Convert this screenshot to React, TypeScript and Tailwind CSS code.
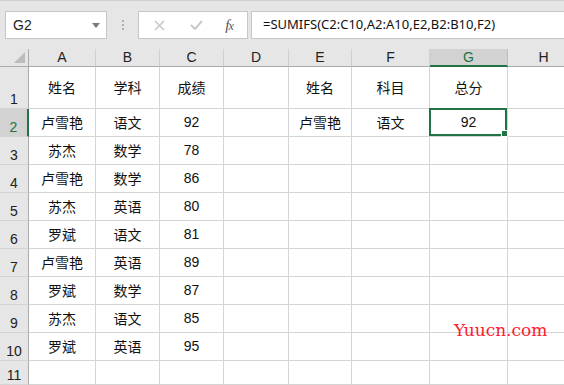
import React from "react"

const cols = [
  { key: "A", w: "w-[67px]" },
  { key: "B", w: "w-[64px]" },
  { key: "C", w: "w-[64px]" },
  { key: "D", w: "w-[65px]" },
  { key: "E", w: "w-[63px]" },
  { key: "F", w: "w-[78px]" },
  { key: "G", w: "w-[78px]" },
  { key: "H", w: "w-[72px]" },
]

const data: string[][] = [
  ["姓名", "学科", "成绩", "", "姓名", "科目", "总分", ""],
  ["卢雪艳", "语文", "92", "", "卢雪艳", "语文", "92", ""],
  ["苏杰", "数学", "78", "", "", "", "", ""],
  ["卢雪艳", "数学", "86", "", "", "", "", ""],
  ["苏杰", "英语", "80", "", "", "", "", ""],
  ["罗斌", "语文", "81", "", "", "", "", ""],
  ["卢雪艳", "英语", "89", "", "", "", "", ""],
  ["罗斌", "数学", "87", "", "", "", "", ""],
  ["苏杰", "语文", "85", "", "", "", "", ""],
  ["罗斌", "英语", "95", "", "", "", "", ""],
  ["", "", "", "", "", "", "", ""],
]

const cjk = "font-['DengXian','Noto_Sans_CJK_SC',sans-serif]"

function Toolbar() {
  return (
    <div className="h-[49px] bg-[#e6e6e6] border-t border-[#d0d0d0] flex items-start pt-[10px] pl-[5px]">
      <div className="w-[102px] h-[28px] bg-white border border-[#c6c6c6] flex items-center justify-between pl-[7px] pr-[6px]">
        <span className="text-[14px] text-[#222] font-['Liberation_Sans',sans-serif]">G2</span>
        <svg width="8" height="5" viewBox="0 0 8 5">
          <path d="M0 0 L8 0 L4 5 Z" fill="#7a7a7a" />
        </svg>
      </div>
      <div className="w-[31px] h-[28px] flex flex-col items-center justify-center gap-[2px]">
        <span className="w-[2px] h-[2px] bg-[#b0b0b0]" />
        <span className="w-[2px] h-[2px] bg-[#b0b0b0]" />
        <span className="w-[2px] h-[2px] bg-[#b0b0b0]" />
      </div>
      <div className="w-[110px] h-[28px] bg-white border border-[#c6c6c6] flex items-center">
        <div className="w-[37px] flex justify-center pl-[4px]">
          <svg width="11" height="11" viewBox="0 0 11 11">
            <path d="M1 1 L10 10 M10 1 L1 10" stroke="#c8c8c8" strokeWidth="1.6" />
          </svg>
        </div>
        <div className="w-[37px] flex justify-center pl-[4px]">
          <svg width="13" height="10" viewBox="0 0 13 10">
            <path d="M1 5 L5 9 L12 1" stroke="#c8c8c8" strokeWidth="2" fill="none" />
          </svg>
        </div>
        <div className="flex-1 flex justify-center pr-[2px]">
          <span className="text-[15px] italic text-[#555] font-['Liberation_Serif',serif] tracking-[-1px]">
            f<span className="text-[12px]">x</span>
          </span>
        </div>
      </div>
      <div className="ml-[3px] flex-1 h-[28px] bg-white border border-r-0 border-[#c6c6c6] flex items-center pl-[11px]">
        <span className="text-[13px] text-[#111] font-['Noto_Sans',sans-serif]">
          =SUMIFS(C2:C10,A2:A10,E2,B2:B10,F2)
        </span>
      </div>
    </div>
  )
}

function HeaderRow() {
  return (
    <div className="flex h-[18px]">
      <div className="w-[29px] shrink-0 bg-[#e6e6e6] border-r border-b border-[#ababab] relative">
        <svg className="absolute right-[3px] bottom-[3px]" width="11" height="11" viewBox="0 0 11 11">
          <path d="M11 0 L11 11 L0 11 Z" fill="#bdbdbd" />
        </svg>
      </div>
      {cols.map((c) => {
        const sel = c.key === "G"
        return (
          <div
            key={c.key}
            className={`${c.w} shrink-0 flex items-center justify-center text-[14px] font-['Liberation_Sans',sans-serif] border-r ${
              sel
                ? "bg-[#d2d2d2] text-[#217346] border-b-2 border-b-[#217346] border-r-[#bdbdbd]"
                : "bg-[#e6e6e6] text-[#222] border-b border-b-[#ababab] border-r-[#cfcfcf]"
            }`}
          >
            {c.key}
          </div>
        )
      })}
    </div>
  )
}

function Row({ idx, cells }: { idx: number; cells: string[] }) {
  const h = idx === 0 ? "h-[42px]" : idx === 10 ? "h-[24px]" : "h-[28px]"
  const selRow = idx === 1
  return (
    <div className={`flex ${h}`}>
      <div
        className={`w-[29px] shrink-0 flex items-end justify-center text-[14px] leading-[18px] font-['Liberation_Sans',sans-serif] border-b border-b-[#d4d4d4] ${
          selRow
            ? "bg-[#d2d2d2] text-[#217346] border-r-2 border-r-[#217346]"
            : "bg-[#e6e6e6] text-[#222] border-r border-r-[#ababab]"
        }`}
      >
        {idx + 1}
      </div>
      {cols.map((c, ci) => {
        const sel = selRow && c.key === "G"
        const val = cells[ci]
        const numeric = /^\d+$/.test(val)
        return (
          <div
            key={c.key}
            className={`${c.w} shrink-0 relative flex items-center justify-center border-r border-b border-[#d4d4d4] bg-white text-[14px] text-[#111] ${
              numeric ? "font-['Liberation_Sans',sans-serif]" : cjk
            }`}
          >
            {val}
            {sel && (
              <div className="absolute -left-[1px] -top-[1px] right-0 bottom-0 border-2 border-[#217346]">
                <div className="absolute -right-[3px] -bottom-[3px] w-[5px] h-[5px] bg-[#217346] border border-white box-content" />
              </div>
            )}
          </div>
        )
      })}
    </div>
  )
}

export default function App() {
  return (
    <div className="w-[564px] h-[385px] overflow-hidden bg-white relative">
      <Toolbar />
      <HeaderRow />
      {data.map((r, i) => (
        <Row key={i} idx={i} cells={r} />
      ))}
      <div className="absolute left-[454px] top-[318px] text-[17px] text-[#ff1a2e] [font-family:'DejaVu_Serif','Liberation_Serif',serif]">
        Yuucn.com
      </div>
    </div>
  )
}
